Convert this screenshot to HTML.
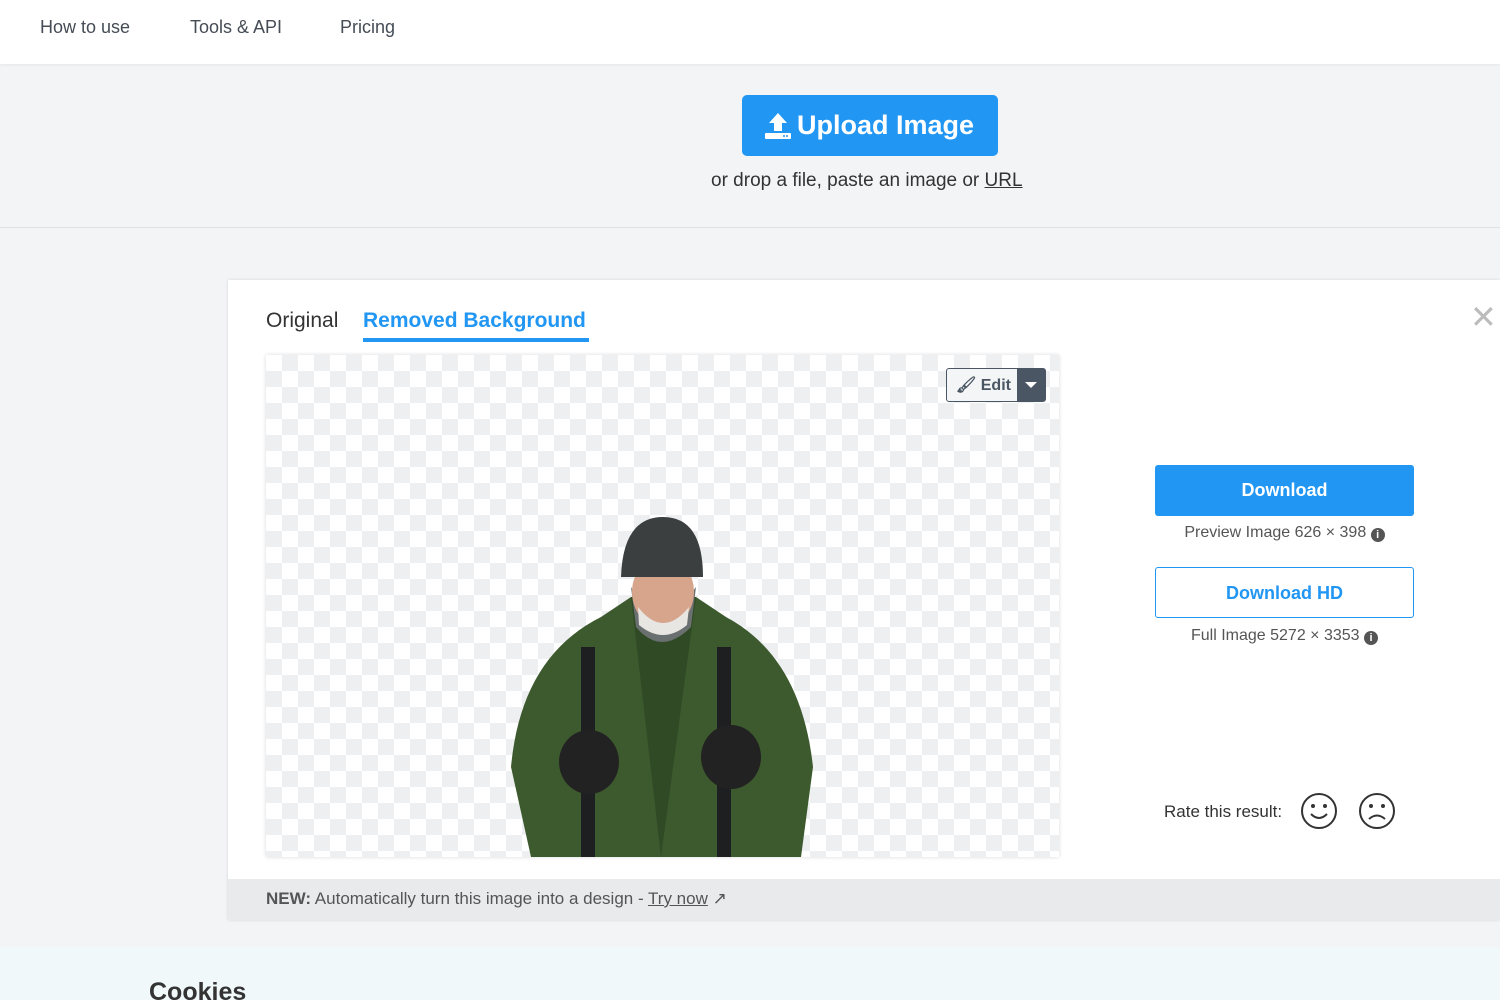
<!DOCTYPE html>
<html><head><meta charset="utf-8"><style>
*{margin:0;padding:0;box-sizing:border-box}
html,body{width:1500px;height:1000px;overflow:hidden}
body{font-family:"Liberation Sans",sans-serif;background:#f3f4f6;position:relative;color:#454c55}
.nav{position:absolute;top:0;left:0;width:1500px;height:64px;background:#fff;box-shadow:0 1px 3px rgba(0,0,0,.06)}
.nav span{position:absolute;top:17px;font-size:18px;color:#454c55}
.upl{position:absolute;left:742px;top:95px;width:256px;height:61px;background:#2196f3;border-radius:5px;color:#fff;font-weight:bold;font-size:27px;line-height:61px}
.sub{position:absolute;left:711px;top:170px;font-size:19px;color:#333}
.hr{position:absolute;top:227px;left:0;width:1500px;height:1px;background:#dde0e4}
.card{position:absolute;left:228px;top:280px;width:1272px;height:640px;background:#fff;box-shadow:0 0 3px rgba(0,0,0,.12)}
.foot{position:absolute;left:228px;top:879px;width:1272px;height:41px;background:#e8eaec;font-size:17px;color:#555;padding:10px 38px}
.chk{position:absolute;left:266px;top:355px;width:793px;height:502px;background-color:#fff;background-image:linear-gradient(45deg,#eeeff1 25%,transparent 25%,transparent 75%,#eeeff1 75%),linear-gradient(45deg,#eeeff1 25%,transparent 25%,transparent 75%,#eeeff1 75%);background-size:32px 32px;background-position:0 0,16px 16px;box-shadow:0 0 4px rgba(0,0,0,.15)}
.btn{position:absolute;left:1155px;width:259px;height:51px;border-radius:3px;font-weight:bold;font-size:18px;text-align:center;line-height:51px}
.cap{position:absolute;width:259px;left:1155px;text-align:center;font-size:16px;color:#555}
.i{display:inline-block;width:14px;height:14px;border-radius:50%;background:#555;color:#fff;font-size:11px;line-height:14px;text-align:center;font-weight:bold;vertical-align:-1px}
</style></head><body>
<div class="nav"><span style="left:40px">How to use</span><span style="left:190px">Tools &amp; API</span><span style="left:340px">Pricing</span></div>
<div class="upl"><svg style="position:absolute;left:22px;top:17px" width="28" height="28" viewBox="0 0 28 28"><path d="M14 1 L5 11 H10 V19 H18 V11 H23 Z" fill="#fff"/><rect x="1" y="21" width="26" height="6" rx="1" fill="#fff"/><circle cx="20" cy="24" r="1" fill="#2196f3"/><circle cx="23" cy="24" r="1" fill="#2196f3"/></svg><span style="position:absolute;left:55px">Upload Image</span></div>
<div class="sub">or drop a file, paste an image or <u>URL</u></div>
<div class="hr"></div>
<div style="position:absolute;top:947px;left:0;width:1500px;height:53px;background:#f0f8fa"></div>
<div style="position:absolute;left:149px;top:978px;font-size:25px;font-weight:bold;color:#333">Cookies</div>
<div class="card">
<div style="position:absolute;left:38px;top:29px;font-size:21px;color:#333">Original</div>
<div style="position:absolute;left:135px;top:29px;font-size:21px;color:#2196f3;font-weight:bold">Removed Background</div>
<div style="position:absolute;left:135px;top:58px;width:226px;height:4px;background:#2196f3"></div>
<div style="position:absolute;left:1242px;top:18px;font-size:32px;color:#bbb">✕</div>
<div style="position:absolute;left:936px;top:522px;font-size:17px;color:#333">Rate this result:</div>
<svg style="position:absolute;left:1072px;top:512px" width="96" height="38" viewBox="0 0 96 38"><g fill="none" stroke="#333" stroke-width="2"><circle cx="19" cy="19" r="17"/><path d="M11 22 Q19 30 27 22"/><circle cx="77" cy="19" r="17"/><path d="M69 27 Q77 20 85 27"/></g><g fill="#333"><circle cx="13" cy="14" r="2"/><circle cx="25" cy="14" r="2"/><circle cx="71" cy="14" r="2"/><circle cx="83" cy="14" r="2"/></g></svg>
</div>
<div class="foot"><b>NEW:</b> Automatically turn this image into a design - <u>Try now</u> ↗</div>
<div class="chk">
<svg style="position:absolute;left:245px;top:162px" width="305" height="340" viewBox="0 0 305 340">
<path d="M20 340 L0 250 Q10 140 90 100 L120 80 L185 80 L215 100 Q290 140 302 250 L290 340 Z" fill="#3d5a2e"/>
<path d="M120 80 L150 340 L185 80 Z" fill="#2f4a25"/>
<path d="M120 70 Q150 120 185 70 L180 110 Q150 140 125 110 Z" fill="#6a6f70"/>
<ellipse cx="152" cy="75" rx="31" ry="36" fill="#d7a48c"/>
<path d="M127 90 Q152 122 178 90 L176 108 Q152 128 128 108 Z" fill="#e8e6e2"/>
<path d="M110 60 Q112 0 152 0 Q192 0 192 60 Z" fill="#3b3f40"/>
<rect x="70" y="130" width="14" height="210" fill="#1d1f20"/><rect x="206" y="130" width="14" height="210" fill="#1d1f20"/>
<ellipse cx="78" cy="245" rx="30" ry="32" fill="#222"/><ellipse cx="220" cy="240" rx="30" ry="32" fill="#222"/>
</svg>
<div style="position:absolute;left:680px;top:13px;width:100px;height:34px;border:1px solid #4a5663;border-radius:3px;background:#f4f5f6">
<span style="position:absolute;left:9px;top:6px;font-size:16px;font-weight:bold;color:#4a5663">🖌 Edit</span>
<div style="position:absolute;right:0;top:0;width:28px;height:32px;background:#4a5663"><div style="position:absolute;left:8px;top:13px;border:6px solid transparent;border-top:6px solid #fff;border-bottom:0"></div></div></div>
</div>
<div class="btn" style="top:465px;background:#2196f3;color:#fff">Download</div>
<div class="cap" style="top:524px">Preview Image 626 × 398 <span class="i">i</span></div>
<div class="btn" style="top:567px;border:1.5px solid #2196f3;background:#fff;color:#2196f3">Download HD</div>
<div class="cap" style="top:627px">Full Image 5272 × 3353 <span class="i">i</span></div>
</body></html>
